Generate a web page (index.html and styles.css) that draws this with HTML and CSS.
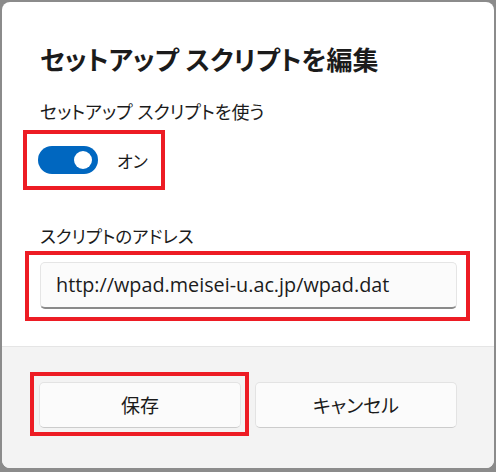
FILE: index.html
```html
<!doctype html>
<html lang="ja">
<head>
  <meta charset="UTF-8">
  <title>セットアップ スクリプトを編集</title>
  <meta name="viewport" content="width=device-width, initial-scale=1.0">
  <link rel="stylesheet" href="styles.css">
</head>
<body>

  <div class="dialog">
    <div class="content">
      <h1>セットアップ スクリプトを編集</h1>

      <div class="label">セットアップ スクリプトを使う</div>
      <div class="mark mark-toggle">
        <span class="toggle"><span class="knob"></span></span>
        <span class="toggle-text">オン</span>
      </div>

      <div class="label label-addr">スクリプトのアドレス</div>
      <div class="mark mark-input">
        <div class="input">http://wpad.meisei-u.ac.jp/wpad.dat</div>
      </div>
    </div>

    <div class="footer">
      <div class="mark mark-btn">
        <button class="btn">保存</button>
      </div>
      <button class="btn">キャンセル</button>
    </div>
  </div>

</body>
</html>
```

FILE: styles.css
```css
body {
  margin: 0;
  background: #8b8b8b;
  font-family: "Open Sans", "Noto Sans CJK JP", sans-serif;
  color: #1b1b1b;
}
.dialog {
  margin: 2px 2px 4px 2px;
  height: 466px;
  background: #fff;
  border-radius: 8px;
  overflow: hidden;
  display: flex;
  flex-direction: column;
}
.content {
  padding: 42px 38px 0 38px;
  height: 302px;
}
h1 {
  margin: 0;
  font-size: 26px;
  line-height: 32px;
  font-weight: 700;
  font-feature-settings: "palt";
}
.label {
  margin-top: 24px;
  font-size: 18px;
  line-height: 24px;
  font-feature-settings: "palt";
}
.label-addr {
  margin-top: 34px;
  font-size: 17.5px;
}

/* red annotation boxes */
.mark {
  border: 4px solid #ed1c24;
}
.mark-toggle {
  display: inline-flex;
  align-items: center;
  margin: 6px 0 0 -17px;
  padding: 0 13px 0 11px;
  height: 52px;
}
.toggle {
  width: 60px;
  height: 28px;
  border-radius: 14px;
  background: #0067c0;
  display: flex;
  align-items: center;
  justify-content: flex-end;
  padding-right: 6px;
  box-sizing: border-box;
}
.knob {
  width: 18px;
  height: 18px;
  border-radius: 50%;
  background: #fff;
}
.toggle-text {
  margin-left: 19px;
  font-size: 17px;
  font-feature-settings: "palt";
}

.mark-input {
  margin: 3px -14px 0 -15px;
  padding: 7px 9px 8px 11px;
}
.input {
  height: 47px;
  box-sizing: border-box;
  background: #fbfbfb;
  border: 1px solid #e5e5e5;
  border-bottom: 2px solid #8a8a8a;
  border-radius: 5px;
  padding-left: 15px;
  font-size: 19.8px;
  line-height: 44px;
}

.footer {
  flex: 1;
  background: #f3f3f3;
  border-top: 1px solid #e5e5e5;
  display: flex;
  align-items: center;
  gap: 6px;
  padding: 0 37px 8px 37px;
}
.mark-btn {
  margin-left: -9px;
  padding: 6px 4px 4px 5px;
  display: flex;
}
.btn {
  width: 202px;
  height: 46px;
  background: #fbfbfb;
  border: 1px solid #e3e3e3;
  border-bottom-color: #cccccc;
  border-radius: 5px;
  font-family: "Open Sans", "Noto Sans CJK JP", sans-serif;
  font-size: 19px;
  color: #1b1b1b;
  font-feature-settings: "palt";
}
.footer > .btn {
  margin-top: 2px;
}
```
